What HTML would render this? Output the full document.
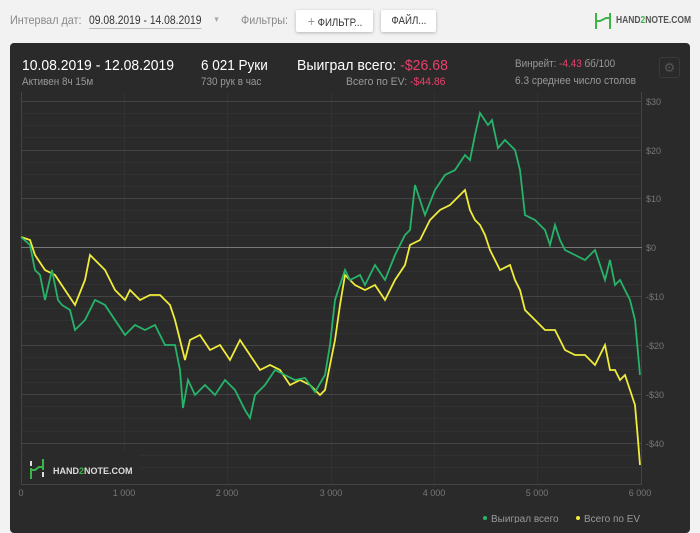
<!DOCTYPE html>
<html><head><meta charset="utf-8"><style>
*{margin:0;padding:0;box-sizing:border-box}
body{width:700px;height:523px;background:#f2f2f2;font-family:"Liberation Sans",sans-serif;position:relative;overflow:hidden}
.t{position:absolute;white-space:nowrap;transform:scaleX(.9);transform-origin:0 0}
.btn{position:absolute;top:10px;height:22px;background:#fff;border-radius:2px;box-shadow:0 1px 3px rgba(0,0,0,.25);font-size:11px;color:#333;line-height:22px;white-space:nowrap;overflow:hidden;text-align:center}
.panel{position:absolute;left:10px;top:43px;width:680px;height:490px;background:#2a2a2a;border-radius:4px}
.red{color:#e8416b}
</style></head><body>
<div class="t" style="left:10px;top:13px;font-size:12px;color:#888">Интервал дат:</div>
<div class="t" style="left:89px;top:13px;font-size:12px;color:#333;border-bottom:1px solid #bbb;padding-bottom:1px;transform:scaleX(.86)">09.08.2019 - 14.08.2019</div>
<div class="t" style="left:213px;top:15px;font-size:8px;color:#aaa">▼</div>
<div class="t" style="left:241px;top:13px;font-size:12px;color:#888">Фильтры:</div>
<div class="btn" style="left:296px;width:77px"><span style="display:inline-block;transform:scaleX(.88)"><span style="color:#999;font-size:14px">+</span> ФИЛЬТР...</span></div>
<div class="btn" style="left:381px;width:55px"><span style="display:inline-block;transform:scaleX(.88)">ФАЙЛ...</span></div>
<svg style="position:absolute;left:594px;top:12px" width="18" height="18"><path d="M2 1v16M16 1v16M2 9h4l6-3h4" stroke="#3bb54a" stroke-width="2" fill="none"/></svg>
<div class="t" style="left:616px;top:15px;font-size:10px;font-weight:bold;color:#555;transform:scaleX(.85)">HAND<span style="color:#3bb54a">2</span>NOTE.COM</div>
<div class="panel"></div>
<div class="t" style="left:22px;top:57px;font-size:15px;color:#fff;transform:scaleX(.93)">10.08.2019 - 12.08.2019</div>
<div class="t" style="left:22px;top:76px;font-size:11px;color:#999">Активен 8ч 15м</div>
<div class="t" style="left:201px;top:57px;font-size:15px;color:#fff;transform:scaleX(.9)">6 021 Руки</div>
<div class="t" style="left:201px;top:76px;font-size:11px;color:#999">730 рук в час</div>
<div class="t" style="left:297px;top:57px;font-size:15px;color:#fff;transform:scaleX(.94)">Выиграл всего: <span class="red">-$26.68</span></div>
<div class="t" style="left:346px;top:76px;font-size:11px;color:#999;transform:scaleX(.95)">Всего по EV: <span class="red">-$44.86</span></div>
<div class="t" style="left:515px;top:58px;font-size:11px;color:#999">Винрейт: <span class="red">-4.43</span> бб/100</div>
<div class="t" style="left:515px;top:75px;font-size:11px;color:#999;transform:scaleX(.92)">6.3 среднее число столов</div>
<div style="position:absolute;left:659px;top:57px;width:21px;height:21px;border:1px solid #3a3a3a;border-radius:3px;color:#555;font-size:13px;text-align:center;line-height:19px">⚙</div>
<svg style="position:absolute;left:0;top:0" width="700" height="523">
<g stroke="#313131" stroke-width="1">
<line x1="21" y1="113.5" x2="642" y2="113.5"/><line x1="21" y1="125.5" x2="642" y2="125.5"/><line x1="21" y1="137.5" x2="642" y2="137.5"/><line x1="21" y1="162.5" x2="642" y2="162.5"/><line x1="21" y1="174.5" x2="642" y2="174.5"/><line x1="21" y1="186.5" x2="642" y2="186.5"/><line x1="21" y1="210.5" x2="642" y2="210.5"/><line x1="21" y1="222.5" x2="642" y2="222.5"/><line x1="21" y1="235.5" x2="642" y2="235.5"/><line x1="21" y1="259.5" x2="642" y2="259.5"/><line x1="21" y1="271.5" x2="642" y2="271.5"/><line x1="21" y1="284.5" x2="642" y2="284.5"/><line x1="21" y1="308.5" x2="642" y2="308.5"/><line x1="21" y1="320.5" x2="642" y2="320.5"/><line x1="21" y1="333.5" x2="642" y2="333.5"/><line x1="21" y1="357.5" x2="642" y2="357.5"/><line x1="21" y1="369.5" x2="642" y2="369.5"/><line x1="21" y1="382.5" x2="642" y2="382.5"/><line x1="21" y1="406.5" x2="642" y2="406.5"/><line x1="21" y1="418.5" x2="642" y2="418.5"/><line x1="21" y1="431.5" x2="642" y2="431.5"/><line x1="21" y1="455.5" x2="642" y2="455.5"/><line x1="21" y1="467.5" x2="642" y2="467.5"/>
<line x1="124.5" y1="92" x2="124.5" y2="484"/><line x1="227.5" y1="92" x2="227.5" y2="484"/><line x1="331.5" y1="92" x2="331.5" y2="484"/><line x1="434.5" y1="92" x2="434.5" y2="484"/><line x1="537.5" y1="92" x2="537.5" y2="484"/>
</g>
<g stroke="#444"><line x1="21" y1="101.5" x2="642" y2="101.5"/><line x1="21" y1="150.5" x2="642" y2="150.5"/><line x1="21" y1="198.5" x2="642" y2="198.5"/><line x1="21" y1="296.5" x2="642" y2="296.5"/><line x1="21" y1="345.5" x2="642" y2="345.5"/><line x1="21" y1="394.5" x2="642" y2="394.5"/><line x1="21" y1="443.5" x2="642" y2="443.5"/><line x1="21" y1="484.5" x2="642" y2="484.5"/><line x1="21.5" y1="92" x2="21.5" y2="484"/><line x1="641.5" y1="92" x2="641.5" y2="484"/></g>
<line x1="21" y1="247.5" x2="642" y2="247.5" stroke="#777"/>
<g font-size="9" fill="#777" font-family="Liberation Sans"><text x="646" y="105">$30</text><text x="646" y="154">$20</text><text x="646" y="202">$10</text><text x="646" y="251">$0</text><text x="646" y="300">-$10</text><text x="646" y="349">-$20</text><text x="646" y="398">-$30</text><text x="646" y="447">-$40</text>
<text x="21" y="496" text-anchor="middle">0</text><text x="124" y="496" text-anchor="middle">1 000</text><text x="227" y="496" text-anchor="middle">2 000</text><text x="331" y="496" text-anchor="middle">3 000</text><text x="434" y="496" text-anchor="middle">4 000</text><text x="537" y="496" text-anchor="middle">5 000</text><text x="640" y="496" text-anchor="middle">6 000</text></g>
<polyline fill="none" stroke="#f0ec3a" stroke-width="1.8" points="21,237 30,240 35,255 45,270 55,275 65,290 75,305 85,280 90,255 95,260 105,270 115,290 125,300 130,290 140,300 150,295 160,295 170,305 175,320 185,360 190,340 200,335 210,350 220,345 230,360 240,340 250,355 260,370 270,365 280,370 290,385 300,380 310,385 320,395 325,390 330,365 335,340 340,305 345,275 355,285 365,290 375,285 385,300 395,280 405,265 410,245 420,240 430,220 440,210 450,205 460,195 465,190 470,210 475,220 480,225 485,235 490,250 495,260 500,270 510,265 515,280 520,290 525,310 535,320 545,330 555,330 560,340 565,350 575,355 585,355 595,365 605,345 610,370 615,370 620,380 625,375 630,390 635,405 638,440 640,465"/>
<polyline fill="none" stroke="#26b36a" stroke-width="1.8" points="21,237 30,245 35,270 40,275 45,300 52,270 58,300 62,305 70,310 75,330 85,320 95,300 105,305 115,320 125,335 135,325 145,330 155,325 165,345 175,345 180,370 183,408 188,380 195,395 205,385 215,395 225,380 235,390 245,410 250,418 255,395 265,385 275,370 285,375 295,380 305,378 315,392 325,375 330,345 335,300 345,270 350,280 360,275 365,285 375,265 385,280 395,255 405,235 410,230 415,185 420,200 425,215 435,190 445,175 455,170 465,155 470,160 475,135 480,113 488,125 492,120 498,148 505,140 515,150 520,170 525,215 535,220 545,230 550,245 555,225 560,240 565,250 575,255 585,260 595,250 600,265 605,280 610,260 615,285 620,280 625,290 630,300 635,320 640,375"/>
<rect x="24" y="452" width="115" height="30" fill="#2a2a2a" opacity=".9"/>
<path d="M31 468v11M43 459v11M31 470h4l4-3h4" stroke="#3bb54a" stroke-width="2" fill="none"/>
<path d="M31 461v5M43 472v5" stroke="#ddd" stroke-width="2"/>
<text x="53" y="474" font-size="9" font-weight="bold" fill="#ddd" font-family="Liberation Sans">HAND<tspan fill="#3bb54a">2</tspan>NOTE.COM</text>
<g font-size="10" fill="#999" font-family="Liberation Sans"><circle cx="485" cy="518" r="2" fill="#26b36a"/><text x="491" y="522">Выиграл всего</text><circle cx="578" cy="518" r="2" fill="#f0ec3a"/><text x="584" y="522">Всего по EV</text></g>
</svg>
</body></html>
